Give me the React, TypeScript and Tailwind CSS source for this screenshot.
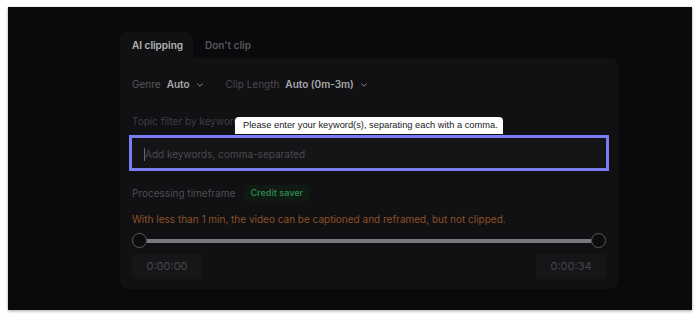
import React from 'react'

function Chevron() {
  return (
    <svg width="8" height="8" viewBox="0 0 10 10" fill="none" className="ml-[6px] mt-[1px]">
      <path d="M2 3.5 L5 6.5 L8 3.5" stroke="#8a8a8e" strokeWidth="1.2" strokeLinecap="round" strokeLinejoin="round" />
    </svg>
  )
}

function Thumb() {
  return <div className="h-[15px] w-[15px] shrink-0 rounded-full border border-[#5a5a5e] bg-[#0c0c0e]" />
}

export default function App() {
  return (
    <div
      className="h-[319px] w-[700px] bg-white pl-[8px] pt-[7px]"
      style={{ fontFamily: 'Inter, "Noto Sans", sans-serif' }}
    >
      <div className="h-[303px] w-[684px] bg-[#0a0a0c] pl-[112px] pt-[25px] shadow-[0_1px_3px_rgba(0,0,0,0.35)]">
        <div className="w-[498px]">
          {/* tabs */}
          <div className="flex h-[26px] items-center text-[10px] font-semibold">
            <div className="flex h-full w-[73px] items-center rounded-t-lg bg-[#111113] pl-3 pt-[1px] text-[#b4b4b8]">
              AI clipping
            </div>
            <div className="pl-3 pt-[1px] text-[#56565a]">Don't clip</div>
          </div>

          {/* body */}
          <div className="flex flex-col rounded-b-lg rounded-tr-lg bg-[#111113] px-3 pb-[10px] pt-[18px] text-[10px]">
            <div className="flex h-4 items-center">
              <span className="text-[#57575b]">Genre</span>
              <span className="ml-[6px] font-semibold text-[#a8a8ac]">Auto</span>
              <Chevron />
              <span className="ml-[22px] text-[#4a4a4e]">Clip Length</span>
              <span className="ml-[6px] font-semibold text-[#a8a8ac]">Auto (0m-3m)</span>
              <Chevron />
            </div>

            <div className="mt-[21px] h-4 leading-4 text-[#3e3e42]">Topic filter by keywords</div>

            <div className="relative mt-[9px]">
              <div className="flex h-[30px] items-center bg-[#151517] pl-3 pt-[2px] outline-[3px] outline-[#7c7cf6] outline-solid">
                <span className="h-[13px] w-px bg-[#6a6a6e]" />
                <span className="text-[#4a4a4e]">Add keywords, comma-separated</span>
              </div>
              <div
                className="absolute left-[103px] top-[-21px] flex h-[17px] w-[268px] items-center rounded-t-[4px] bg-white pl-[8px] text-[9.3px] text-[#1a1a1a]"
                style={{ fontFamily: '"Liberation Sans", Arial, sans-serif' }}
              >
                Please enter your keyword(s), separating each with a comma.
              </div>
            </div>

            <div className="mt-[17px] flex h-4 items-center">
              <span className="text-[#4e4e52]">Processing timeframe</span>
              <span className="ml-[9px] flex h-4 w-[65px] items-center justify-center rounded-[4px] bg-[#0f1a13] text-[9px] font-semibold text-[#2f8049]">
                Credit saver
              </span>
            </div>

            <div className="mt-[10px] h-4 leading-4 text-[#8c5024]">
              With less than 1 min, the video can be captioned and reframed, but not clipped.
            </div>

            <div className="mt-[6px] flex h-[15px] items-center">
              <Thumb />
              <div className="h-[4px] flex-1 bg-[#7a7a7e]" />
              <Thumb />
            </div>

            <div className="mt-[6px] flex justify-between text-[11px]">
              <div className="flex h-[25px] w-[70px] items-center justify-center rounded-[4px] bg-[#161618] text-[#47474b]">
                0:00:00
              </div>
              <div className="flex h-[25px] w-[70px] items-center justify-center rounded-[4px] bg-[#161618] text-[#47474b]">
                0:00:34
              </div>
            </div>
          </div>
        </div>
      </div>
    </div>
  )
}
